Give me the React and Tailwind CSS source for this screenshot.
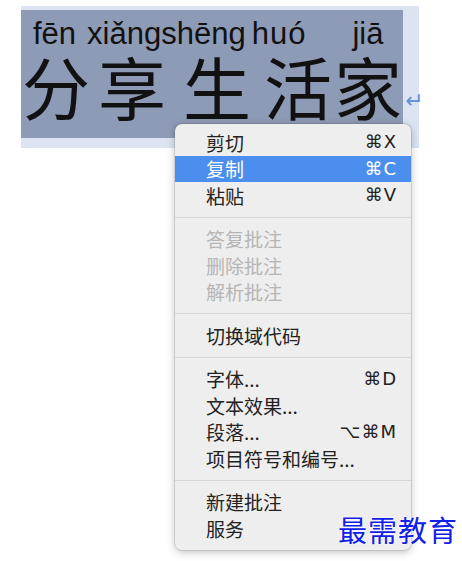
const MENU = [
  { type: 'item', label: '剪切', key: '⌘X' },
  { type: 'item', label: '复制', key: '⌘C', active: true },
  { type: 'item', label: '粘贴', key: '⌘V' },
  { type: 'sep' },
  { type: 'item', label: '答复批注', disabled: true },
  { type: 'item', label: '删除批注', disabled: true },
  { type: 'item', label: '解析批注', disabled: true },
  { type: 'sep' },
  { type: 'item', label: '切换域代码' },
  { type: 'sep' },
  { type: 'item', label: '字体...', key: '⌘D' },
  { type: 'item', label: '文本效果...' },
  { type: 'item', label: '段落...', key: '⌥⌘M' },
  { type: 'item', label: '项目符号和编号...' },
  { type: 'sep' },
  { type: 'item', label: '新建批注' },
  { type: 'item', label: '服务' },
]

const cjk = "font-['Noto_Sans_CJK_SC','Noto_Sans',sans-serif]"

function ContextMenu() {
  return (
    <div className="absolute left-[175px] top-[124px] w-[236px] rounded-[7px] bg-[#eeeeee] pt-[5px] pb-[8px] shadow-[0_2px_8px_rgba(0,0,0,0.25)] ring-1 ring-black/10">
      {MENU.map((m, i) =>
        m.type === 'sep' ? (
          <div key={i} className="flex h-[17px] items-center">
            <div className="h-px w-full bg-[#d6d6d6]" />
          </div>
        ) : (
          <div
            key={i}
            className={`flex h-[26.5px] items-center justify-between pl-[31px] pr-[14px] text-[19px] leading-none ${
              m.active ? 'bg-[#4b8eed] text-white' : m.disabled ? 'text-[#b5b5b5]' : 'text-[#222]'
            }`}
          >
            <span className={cjk}>{m.label}</span>
            {m.key && (
              <span className="font-['DejaVu_Sans',sans-serif] text-[18px] tracking-[1px]">{m.key}</span>
            )}
          </div>
        )
      )}
    </div>
  )
}

export default function App() {
  return (
    <div className="relative h-[561px] w-[462px] overflow-hidden bg-white">
      {/* selected paragraph */}
      <div className="ml-[21px] mt-[6px] h-[142px] w-[398px] bg-[#dce4f3] pt-[4px]">
        <div className="relative h-[128px] w-[382px] bg-[#8e9bb6]">
          <div className="flex whitespace-pre pl-[12px] pt-[8px] font-['Liberation_Sans',sans-serif] text-[31px] leading-[32px] text-[#111]">
            <span>fēn</span>
            <span className="ml-[11px]">xiǎngshēng</span>
            <span className="ml-[6px] tracking-[1px]">huó</span>
            <span className="ml-[46px]">jiā</span>
          </div>
          <div className={`flex pl-[1px] pt-[2px] text-[68px] leading-[68px] text-[#111] ${cjk}`}>
            <span>分</span>
            <span className="ml-[8px]">享</span>
            <span className="ml-[17px]">生</span>
            <span className="ml-[13px]">活</span>
            <span className="ml-[2px]">家</span>
          </div>
          <span className="absolute left-[384px] top-[74px] font-['DejaVu_Sans',sans-serif] text-[22px] text-[#5b8fd8]">↵</span>
        </div>
      </div>

      <ContextMenu />

      <div className="absolute left-[338px] top-[509px] font-['Noto_Sans_CJK_SC',serif] text-[29px] leading-[40px] tracking-[1px] text-[#1020e8] [text-shadow:0_0_2px_#fff,0_0_2px_#fff]">
        最需教育
      </div>
    </div>
  )
}
